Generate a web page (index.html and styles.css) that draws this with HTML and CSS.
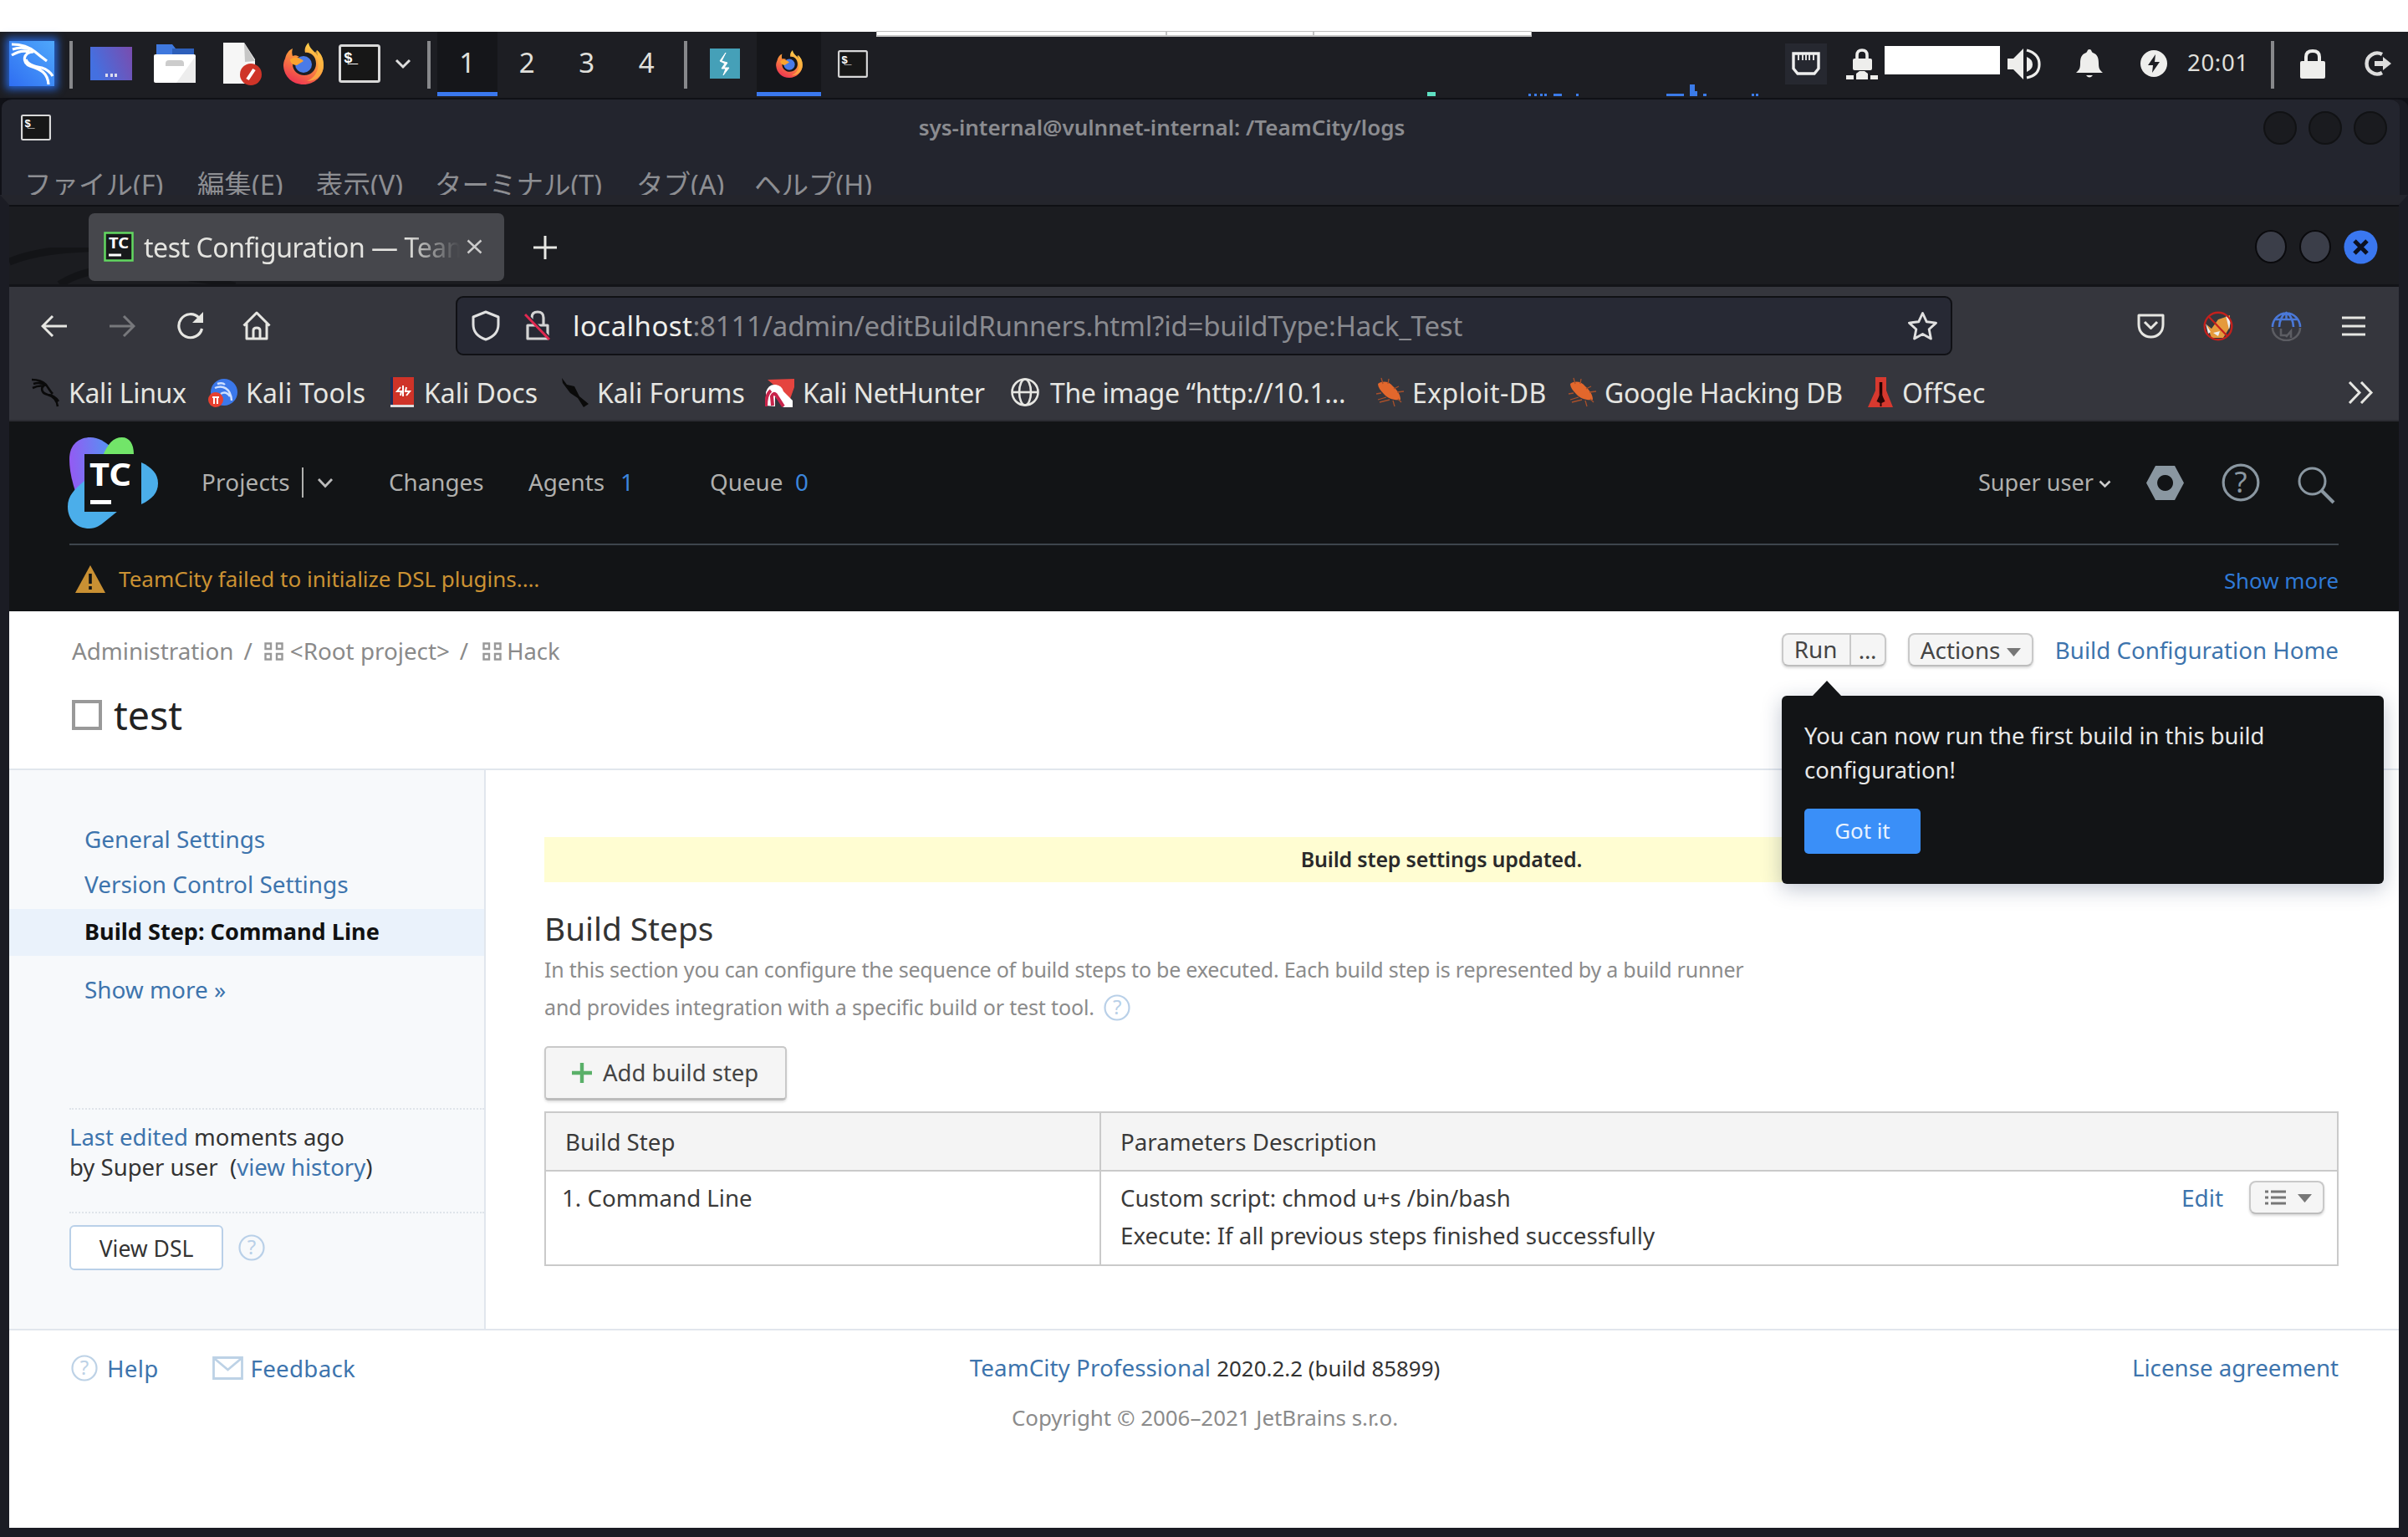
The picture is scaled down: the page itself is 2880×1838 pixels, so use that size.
FILE: index.html
```html
<!DOCTYPE html>
<html lang="en">
<head>
<meta charset="utf-8">
<title>test Configuration — TeamCity</title>
<link rel="stylesheet" href="styles.css">
</head>
<body>
<svg class="defs" width="0" height="0">
  <defs>
    <linearGradient id="gKali" x1="0" y1="1" x2="1" y2="0"><stop offset="0" stop-color="#2f6ef2"/><stop offset="1" stop-color="#4fa8fb"/></linearGradient>
    <linearGradient id="gDesk" x1="0" y1="0.3" x2="1" y2="0"><stop offset="0" stop-color="#4470e0"/><stop offset="1" stop-color="#7a4cae"/></linearGradient>
    <linearGradient id="gFox" x1="0.8" y1="0" x2="0.3" y2="1"><stop offset="0" stop-color="#ffe14d"/><stop offset="0.45" stop-color="#fb923c"/><stop offset="1" stop-color="#ee3352"/></linearGradient>
    <linearGradient id="gPurple" x1="0" y1="0.5" x2="1" y2="0.4"><stop offset="0" stop-color="#9559f3"/><stop offset="1" stop-color="#4a9df2"/></linearGradient>
    <symbol id="firefox" viewBox="0 0 48 50">
      <path d="M30 0c-4 4-5 8-4 12 6-1 13 4 13 13 0 8-6 14-14 14S11 33 11 26c0-5 3-8 8-9-3-2-6-2-8-1-1-3-1-6 0-9-5 2-8 7-9 12C0 23 0 26 0 28c1 13 11 22 24 22s24-10 24-23c0-8-3-14-8-18l1 7C38 10 31 8 30 0z" fill="url(#gFox)"/>
      <circle cx="24" cy="26" r="10" fill="#4a7be8"/>
      <path d="M8 20c6-4 12-2 16 2l-8 5c-5 0-8-3-8-7z" fill="#fba32f"/>
      <path d="M37 13c8 10 6 27-9 33 13 0 20-9 20-19 0-8-3-14-8-18z" fill="#fdba42" opacity=".7"/>
    </symbol>
    <symbol id="term" viewBox="0 0 50 46">
      <rect x="1.5" y="1.5" width="47" height="43" rx="2" fill="#171717" stroke="#d8d8d8" stroke-width="3"/>
      <text x="6" y="22" font-family="Liberation Mono, monospace" font-size="18" font-weight="700" fill="#fff" textLength="17">$_</text>
    </symbol>
    <symbol id="dragon" viewBox="0 0 36 36">
      <path d="M1 3c7 0 13 2 17 6 3 4 5 8 8 11M3 8c6-2 11-1 15 2M2 13c6-3 10-3 14-2M17 9c-6 3-5 10 3 12 7 2 11 6 12 14M20 21c5 0 9 2 13 8" fill="none" stroke="currentColor" stroke-width="2.6"/>
    </symbol>
    <symbol id="bug" viewBox="0 0 36 36">
      <path d="M4 8c6-4 13-3 18 3 6 5 9 11 9 16-7 1-15-1-20-7-4-4-7-8-7-12z" fill="#e2672c"/>
      <path d="M10 8L8 1M16 8l1-6M23 14l6-3M27 18l8-1M8 19l-6 1M14 24l-10 3M18 27l-12 3M22 28l2 7M28 26l4 4" stroke="#a8502a" stroke-width="1.3"/>
    </symbol>
    <symbol id="help" viewBox="0 0 32 32">
      <circle cx="16" cy="16" r="14.5" fill="none" stroke="currentColor" stroke-width="2.2"/>
      <text x="16" y="24.3" text-anchor="middle" font-family="Noto Sans, sans-serif" font-size="24" fill="currentColor">?</text>
    </symbol>
    <symbol id="squares" viewBox="0 0 24 22">
      <path d="M1.5 1.5h6.5v6.5H1.5zM15 1.5h6.5v6.5H15zM1.5 14h6.5v6.5H1.5zM15 14h6.5v6.5H15z" fill="none" stroke="#999" stroke-width="2.4"/>
    </symbol>
  </defs>
</svg>

<div class="blank"></div>

<header class="panel">
  <span class="kali"><svg width="54" height="54" viewBox="0 0 54 54"><rect width="54" height="54" fill="url(#gKali)"/><path d="M3 4c12 0 21 3 28 9 6 5 10 8 14 11M4 10c9-3 17-2 24 1M3 17c8-5 15-6 21-4M29 13c-13 1-14 13-4 17 13 4 21 8 22 22M20 22c2 7 12 9 19 10 6 2 10 5 13 10" fill="none" stroke="#fff" stroke-width="3.2"/></svg></span>
  <i class="psep s1"></i>
  <svg class="p-desk" width="50" height="40"><rect width="50" height="40" fill="url(#gDesk)"/><path d="M18 34h3M24 34h3M29 34h3" stroke="#dde" stroke-width="4"/></svg>
  <svg class="p-fold" width="50" height="46"><path d="M3 0h19l4 5h22v10H3z" fill="#3f78de"/><path d="M22 5h26v8H22z" fill="#2d5fba"/><rect y="12" width="50" height="34" rx="2" fill="#fff"/><path d="M50 14v32H27z" fill="#ededed"/><path d="M14 26v-3q0-4 4-4h14q4 0 4 4v3z" fill="#ccc"/></svg>
  <svg class="p-file" width="46" height="51"><path d="M0 0h25l13 20v29H0z" fill="#f6f6f6"/><path d="M25 0l13 22-12 1z" fill="#c6c6c6"/><circle cx="33" cy="38" r="13" fill="#cf3428"/><path d="M29 44l8-12" stroke="#fff" stroke-width="4"/></svg>
  <svg class="p-fox" width="48" height="50"><use href="#firefox"/></svg>
  <svg class="p-term" width="50" height="46"><use href="#term"/></svg>
  <svg class="p-chev" width="20" height="13"><path d="M2 2l8 8 8-8" fill="none" stroke="#ddd" stroke-width="3"/></svg>
  <i class="psep s2"></i>
  <span class="ws active">1</span><span class="ws">2</span><span class="ws">3</span><span class="ws">4</span>
  <i class="psep s3"></i>
  <svg class="p-burp" width="36" height="36"><rect width="36" height="36" fill="#45a0b8"/><path d="M19 5l-5 10 7 2-4 6h6l-7 9 3-8h-5l4-6-6-3z" fill="#fff" stroke="#fff"/></svg>
  <span class="task"><svg width="32" height="33"><use href="#firefox"/></svg></span>
  <svg class="p-term2" width="36" height="33"><use href="#term"/></svg>
  <span class="grow"></span>
  <span class="eth"><svg width="34" height="29"><path d="M2 2h30v18l-5 6H7l-5-6z" fill="none" stroke="#eee" stroke-width="3.4"/><path d="M8 3v7M13 3v7M17 3v7M21 3v7M26 3v7" stroke="#ddd" stroke-width="2"/></svg></span>
  <svg class="p-vpn" width="38" height="37" fill="#eeeeec"><rect x="8" y="12" width="23" height="14" rx="2"/><path d="M13 13V8q0-6 6-6t6 6v5" fill="none" stroke="#eeeeec" stroke-width="3.6"/><path d="M0 32h9v5H0zM12 30l4-3h6l4 3v7H12zM29 32h9v5h-9z"/></svg>
  <span class="mask"></span>
  <svg class="p-vol" width="40" height="37" fill="#eeeeec"><path d="M0 12h7L19 0v37L7 25H0z"/><path d="M23 10q7 3 7 9t-7 9z"/><path d="M23 2q15 4 15 17T23 35" fill="none" stroke="#eeeeec" stroke-width="3.2"/></svg>
  <svg class="p-bell" width="32" height="35" fill="#eeeeec"><path d="M16 0c3 0 2 3 4 4 6 2 7 7 7 13 0 7 2 8 5 11H0c3-3 5-4 5-11C5 11 6 6 12 4c2-1 1-4 4-4zM12 31h8q-4 5-8 0z"/></svg>
  <svg class="p-pow" width="32" height="32"><circle cx="16" cy="16" r="16" fill="#eeeeec"/><path d="M18 5L9 18h6l-1 9 9-13h-6z" fill="#1d1e23"/></svg>
  <span class="clock">20:01</span>
  <i class="psep s4"></i>
  <svg class="p-lock" width="30" height="35"><rect y="14" width="30" height="21" rx="2" fill="#eeeeec"/><path d="M7 15V9q0-7 8-7t8 7v6" fill="none" stroke="#eeeeec" stroke-width="4"/></svg>
  <svg class="p-out" width="34" height="32"><path d="M23 5a12.500 12.500 0 1 0 0 22" fill="none" stroke="#ddd" stroke-width="4.400"/><path d="M14 13h10V8l10 8-10 8v-5H14z" fill="#ddd"/></svg>
  <svg class="graph" width="400" height="16" fill="#3b7be8"><path fill="#5fe0c2" d="M0 9h10v5H0z"/><path d="M121 11h3v3h-3zM128 11h3v3h-3zM135 11h3v3h-3zM140 11h3v3h-3zM151 11h10v3h-10zM178 11h3v3h-3zM286 11h21v3h-21zM314 12v-12h6v8h3v6h-9zM330 11h4v3h-4zM388 11h3v3h-3zM393 11h3v3h-3z"/></svg>
  <div class="strip"><i></i><i></i><i></i></div>
</header>

<section class="terminal">
  <div class="tbar">
    <svg width="36" height="31" viewBox="0 0 50 46" preserveAspectRatio="none"><use href="#term"/></svg>
    <h1>sys-internal@vulnnet-internal: /TeamCity/logs</h1>
    <span class="tbtns"><i></i><i></i><i></i></span>
  </div>
  <div class="tmenu"><span>ファイル(F)</span><span>編集(E)</span><span>表示(V)</span><span>ターミナル(T)</span><span>タブ(A)</span><span>ヘルプ(H)</span></div>
</section>

<main class="browser">
  <div class="tabs">
    <svg class="swirl" width="290" height="44"><path d="M0 17C30 5 60 2 110 0M60 44c15-9 25-12 40-16M215 36c25 2 40 6 55 10" fill="none" stroke="#121316" stroke-width="9"/></svg>
    <div class="tab">
      <svg width="36" height="36"><rect x="1.500" y="1.500" width="33" height="33" fill="#18191b" stroke="#62d860" stroke-width="2.500"/><text x="6" y="20" font-family="Noto Sans, sans-serif" font-weight="700" font-size="18" fill="#fff" textLength="24" lengthAdjust="spacingAndGlyphs">TC</text><path d="M6 28h15" stroke="#fff" stroke-width="3"/></svg>
      <span class="tabname">test Configuration — Team</span>
      <svg class="x" width="19" height="18"><path d="M1.500 1.500l16 15M17.500 1.500l-16 15" stroke="#ccc" stroke-width="2.400"/></svg>
    </div>
    <svg class="plus" width="28" height="28"><path d="M14 0v28M0 14h28" stroke="#e8e8e4" stroke-width="3"/></svg>
    <span class="wbtns"><i></i><i></i><svg width="41" height="41"><circle cx="20.500" cy="20.500" r="20" fill="#3a77f0"/><path d="M13 13l15 15M28 13L13 28" stroke="#0c1020" stroke-width="5"/></svg></span>
  </div>

  <div class="nav">
    <svg class="n-back" width="32" height="28"><path d="M31 14H2M14 2L2 14l12 12" fill="none" stroke="#e6e6e2" stroke-width="3"/></svg>
    <svg class="n-fwd" width="32" height="28"><path d="M1 14h29M18 2l12 12-12 12" fill="none" stroke="#77787c" stroke-width="3"/></svg>
    <svg class="n-rel" width="33" height="34"><path d="M27 7A14 14 0 1 0 30.500 20" fill="none" stroke="#e6e6e2" stroke-width="3.200"/><path d="M32 0v13H19z" fill="#e6e6e2"/></svg>
    <svg class="n-home" width="34" height="35"><path d="M1.500 17.500L17 2l15.500 15.500M5 15v18h24V15M13 33V23q0-3 4-3t4 3v10" fill="none" stroke="#e6e6e2" stroke-width="3" stroke-linejoin="round"/></svg>
    <div class="url">
      <svg class="u-shield" width="34" height="37"><path d="M17 2L2 8v9c0 9 6 15 15 18 9-3 15-9 15-18V8z" fill="none" stroke="#e0e0e0" stroke-width="3" stroke-linejoin="round"/></svg>
      <svg class="u-lock" width="32" height="37"><path d="M9 12V9q0-7 7-7t7 7v8M4 18h24v16H4z" fill="none" stroke="#d4d4d4" stroke-width="3.200" stroke-linejoin="round"/><path d="M3 5l29 30" stroke="#272934" stroke-width="3"/><path d="M1 5l29 30" stroke="#e22850" stroke-width="3"/></svg>
      <span class="addr"><b>localhost</b>:8111/admin/editBuildRunners.html?id=buildType:Hack_Test</span>
      <svg class="u-star" width="37" height="36"><path d="M18.500 2.500l4.800 10.300 11.200 1.300-8.300 7.700 2.200 11.200-9.900-5.600L8.600 33l2.200-11.200-8.300-7.700 11.200-1.300z" fill="none" stroke="#e0e0e0" stroke-width="2.900" stroke-linejoin="round"/></svg>
    </div>
    <svg class="n-pocket" width="33" height="30"><path d="M2 2h29v11c0 9-6 15-14.500 15S2 22 2 13zM9 10l7.500 7.500L24 10" fill="none" stroke="#e6e6e2" stroke-width="3" stroke-linejoin="round"/></svg>
    <svg class="n-foxy" width="36" height="36"><path d="M4 16l6 5 8-11 9-3 5-2v14l-8 13H10z" fill="#e59a3c"/><path d="M3 15l6 10-3 2zM27 5l6 7-2 10zM12 26l8-2-2 6z" fill="#eee"/><circle cx="18" cy="18" r="16.300" fill="none" stroke="#c4201c" stroke-width="2.400"/><path d="M7 7l22 23" stroke="#c4201c" stroke-width="2.200"/></svg>
    <svg class="n-globe" width="37" height="36" fill="none" stroke-width="2.600"><path d="M2 19a16.500 16.500 0 0 1 33 0M10 19q1-13 8.500-17 7.500 4 8.500 17M18.500 2v9M5 10h27" stroke="#4a78d8"/><path d="M2 20a16.500 15 0 0 0 33 0M12 21v8h7M18 31l6-7v8" stroke="#5c5d63"/></svg>
    <svg class="n-menu" width="28" height="24"><path d="M0 2h28M0 12h28M0 22h28" stroke="#e6e6e2" stroke-width="3"/></svg>
  </div>

  <div class="marks">
    <span><svg width="36" height="36" color="#0a0a0a"><use href="#dragon"/></svg>Kali Linux</span>
    <span><svg width="36" height="36"><circle cx="19" cy="18" r="16" fill="#3b78ea"/><path d="M8 13c9-4 19 0 20 15M15 20q6-4 11 3M11 8q6-2 9 1" fill="none" stroke="#cfe0ff" stroke-width="2.400"/><circle cx="9" cy="27" r="9" fill="#e8402f"/><path d="M5 24h8M7 24v8M11 24v8" stroke="#fff" stroke-width="2"/></svg>Kali Tools</span>
    <span><svg width="36" height="36"><rect x="5" width="28" height="33" fill="#cf3328"/><path d="M5 0h3v33H5z" fill="#1f2c58"/><path d="M5 33h28v3H5z" fill="#ddd"/><path d="M17 12l-4 5h5l-1 5M24 12l-1 5h5l-4 5M20 10v13" stroke="#fff" stroke-width="2" fill="none"/></svg>Kali Docs</span>
    <span><svg width="36" height="36"><path d="M3 1l6 8 9 2 6 12 11 9-6 4-7-11-9-6L4 7z" fill="#0a0a0a"/></svg>Kali Forums</span>
    <span><svg width="36" height="36"><path d="M3 3L35 2v10l-5 14z" fill="#e5443f"/><path d="M1 34V18Q4 8 13 9q7 1 9 8l11 11v8H22L12 23v12z" fill="#fff"/><path d="M1 35c0-8 2-16 6-19M22 35L13 21q-3-3-5 2l1 11" stroke="#c8234a" stroke-width="4" fill="none"/></svg>Kali NetHunter</span>
    <span><svg class="shift" width="36" height="36" fill="none" stroke="#e6e6e2" stroke-width="2.600"><circle cx="18" cy="18" r="15.500"/><ellipse cx="18" cy="18" rx="7" ry="15.500"/><path d="M3 18h30"/></svg>The image “http://10.1…</span>
    <span><svg width="36" height="36"><use href="#bug"/></svg>Exploit-DB</span>
    <span><svg width="36" height="36"><use href="#bug"/></svg>Google Hacking DB</span>
    <span><svg width="36" height="36"><path d="M13 0h13v16l8 20H4l9-20z" fill="#d8392f"/><path d="M19.500 6v18" stroke="#200" stroke-width="3.500"/><path d="M19.500 18l5 11-4 2v4h-2v-4l-4-2z" fill="#2a0606"/></svg>OffSec</span>
    <svg class="more" width="31" height="27"><path d="M2 1l12 12.500L2 26M16 1l12 12.500L16 26" fill="none" stroke="#e6e6e2" stroke-width="3"/></svg>
  </div>

  <div class="page">
    <header class="tc">
      <div class="tcnav">
        <svg class="logo" width="109" height="109" viewBox="0 0 109 109">
          <path d="M2 26C2 8 14 0 27 0c10 0 17 5 24 11l10 22-40 60C8 66 2 45 2 26z" fill="url(#gPurple)"/>
          <path d="M42 22C48 8 54 0 65 0c9 0 14 8 14 20H42z" fill="#72e569"/>
          <path d="M20 52C8 62 0 70 0 83c0 16 11 26 26 26 8 0 13-4 18-8l26-21H20z" fill="#4baeea"/>
          <path d="M88 30c13 6 20 14 20 25s-7 19-20 25z" fill="#4baeea"/>
          <rect x="20" y="20" width="60" height="69" fill="#121416"/>
          <text x="26" y="58" font-family="Noto Sans, sans-serif" font-weight="700" font-size="38" fill="#fff" textLength="50" lengthAdjust="spacingAndGlyphs">TC</text>
          <path d="M27 77.500h25" stroke="#fff" stroke-width="5"/>
        </svg>
        <span class="t-proj">Projects</span><i class="bar"></i>
        <svg class="t-chev" width="20" height="13"><path d="M2 2l8 8.500L18 2" fill="none" stroke="#bbb" stroke-width="2.800"/></svg>
        <span class="t-chg">Changes</span>
        <span class="t-ag">Agents</span><span class="t-n1">1</span>
        <span class="t-q">Queue</span><span class="t-n0">0</span>
        <span class="grow"></span>
        <span class="t-user">Super user</span>
        <svg class="t-uchev" width="15" height="10"><path d="M1.500 1.500l6 6 6-6" fill="none" stroke="#ccc" stroke-width="2.600"/></svg>
        <svg class="t-nut" width="45" height="41"><path fill-rule="evenodd" d="M11 0h23l11 20.500L34 41H11L0 20.500zM22.500 11a9.500 9.500 0 1 0 .1 0z" fill="#8a97a1"/></svg>
        <svg class="t-help" width="46" height="46" viewBox="0 0 32 32"><use href="#help"/></svg>
        <svg class="t-find" width="45" height="45"><circle cx="17.500" cy="17.500" r="15.500" fill="none" stroke="#8a97a1" stroke-width="3"/><path d="M28 28l15 15" stroke="#8a97a1" stroke-width="4"/></svg>
      </div>
      <div class="warn">
        <svg width="36" height="33"><path d="M18 0l18 33H0z" fill="#c99033"/><path d="M18 10v12M18 25v4" stroke="#121416" stroke-width="3.600"/></svg>
        <span>TeamCity failed to initialize DSL plugins.…</span>
        <a>Show more</a>
      </div>
    </header>

    <section class="title">
      <div class="crumbs">
        <span>Administration</span><span class="sl1">/</span>
        <svg class="c1" width="24" height="22"><use href="#squares"/></svg><span class="root">&lt;Root project&gt;</span><span class="sl2">/</span>
        <svg class="c2" width="24" height="22"><use href="#squares"/></svg><span class="hack">Hack</span>
        <span class="grow"></span>
        <span class="btn run"><span>Run</span><span>...</span></span>
        <span class="btn act">Actions<svg width="17" height="10"><path d="M0 0h17l-8.500 10z" fill="#777"/></svg></span>
        <a>Build Configuration Home</a>
      </div>
      <div class="name"><i></i><h2>test</h2></div>
    </section>

    <section class="body">
      <aside>
        <a>General Settings</a>
        <a>Version Control Settings</a>
        <b>Build Step: Command Line</b>
        <a class="sm">Show more »</a>
        <p><a>Last edited</a> moments ago<br>by Super user&nbsp; (<a>view history</a>)</p>
        <div class="dsl"><span>View DSL</span><svg width="32" height="32"><use href="#help"/></svg></div>
      </aside>
      <div class="content">
        <div class="msg">Build step settings updated.</div>
        <h3>Build Steps</h3>
        <p class="desc">In this section you can configure the sequence of build steps to be executed. Each build step is represented by a build runner<br><span>and provides integration with a specific build or test tool.</span><svg width="32" height="32"><use href="#help"/></svg></p>
        <div class="add"><svg width="24" height="24"><path d="M12 0v24M0 12h24" stroke="#5ab069" stroke-width="4.400"/></svg>Add build step</div>
        <table>
          <tr><th>Build Step</th><th>Parameters Description</th></tr>
          <tr><td>1. Command Line</td><td><div class="params"><div>Custom script: chmod u+s /bin/bash<br><span>Execute: If all previous steps finished successfully</span></div><a>Edit</a><span class="btn lst"><svg width="56" height="20"><path d="M0 3h4M7 3h18M0 10h4M7 10h18M0 17h4M7 17h18" stroke="#777" stroke-width="3"/><path d="M39 6h17l-8.500 10z" fill="#777"/></svg></span></div></td></tr>
        </table>
      </div>
    </section>

    <footer>
      <div class="fl"><svg width="32" height="32"><use href="#help"/></svg><a>Help</a><svg class="mail" width="37" height="28"><path d="M1.500 1.500h34v25h-34zM3 3l15.500 13L34 3" fill="none" stroke="#bdd2e6" stroke-width="2.800"/></svg><a>Feedback</a></div>
      <div class="fc"><div><a>TeamCity Professional</a> <span>2020.2.2 (build 85899)</span></div><div class="copy">Copyright © 2006–2021 JetBrains s.r.o.</div></div>
      <div class="fr"><a>License agreement</a></div>
    </footer>

    <div class="popup">
      <p>You can now run the first build in this build<br>configuration!</p>
      <span class="got">Got it</span>
    </div>
  </div>
</main>
</body>
</html>
```
FILE: styles.css
```css
* { box-sizing: border-box; }
body { margin: 0; width: 2880px; height: 1838px; overflow: hidden; background: #101117; font-family: "Noto Sans", "Noto Sans CJK JP", sans-serif; font-size: 27.700px; font-weight: 400; }
svg { display: block; flex: none; }
h1, h2, h3, p { margin: 0; font-weight: 400; }
i { font-style: normal; display: block; flex: none; }
a { color: #3d74ad; }
.defs { position: absolute; }
.grow { flex: 1; }
.blank { height: 38px; background: #fff; }

/* desktop panel */
.panel { position: relative; height: 79px; background: #1d1e23; display: flex; align-items: center; color: #e0e0dc; }
.panel > svg { margin-bottom: 3px; }
.kali { margin-left: 11px; margin-bottom: 3px; box-shadow: 0 0 9px 4px #2560cc; }
.psep { width: 4px; height: 57px; background: #87888b; }
.s1 { margin-left: 18px; }
.p-desk { margin-left: 21px; }
.p-fold { margin-left: 26px; }
.p-file { margin-left: 33px; }
.p-fox { margin-left: 26px; }
.p-term { margin-left: 18px; }
.p-chev { margin-left: 17px; }
.s2 { margin-left: 19px; }
.ws { width: 71.500px; height: 79px; text-align: center; font-size: 33px; line-height: 74px; }
.ws.active { margin-left: 8px; background: #15161a; border-bottom: 5px solid #3a78ee; height: 77px; align-self: flex-start; line-height: 74px; }
.s3 { margin-left: 9px; }
.p-burp { margin-left: 27px; }
.task { margin-left: 20px; width: 77px; height: 77px; align-self: flex-start; background: #15161a; border-bottom: 5px solid #3a78ee; display: flex; justify-content: center; align-items: center; padding-top: 4px; }
.p-term2 { margin-left: 20px; }
.eth { width: 50px; height: 49px; background: #262830; display: grid; place-items: center; margin-bottom: 3px; }
.p-vpn { margin-left: 23px; }
.mask { margin-left: 8px; width: 138px; height: 34px; background: #fff; margin-bottom: 11px; }
.p-vol { margin-left: 9px; }
.p-bell { margin-left: 42px; }
.p-pow { margin-left: 45px; }
.clock { margin-left: 24px; width: 72px; font-size: 27.500px; line-height: 40px; letter-spacing: .7px; margin-bottom: 6px; }
.s4 { margin-left: 28px; }
.p-lock { margin-left: 31px; }
.p-out { margin-left: 45px; margin-right: 20px; }
.graph { position: absolute; left: 1707px; top: 63px; }
.panel > .graph { margin: 0; }
.strip { position: absolute; left: 1048px; top: -1px; width: 784px; height: 7px; display: flex; background: #fff; border: 1px solid #bdbdbd; border-bottom: 2px solid #c4c4c4; }
.strip i:nth-child(1) { width: 347px; border-right: 2px solid #c4c4c4; }
.strip i:nth-child(2) { width: 176px; border-right: 2px solid #c4c4c4; }

/* terminal window */
.terminal { height: 116px; margin: 0 0 0 2px; background: #23252e; border-top: 2px solid #101116; border-radius: 12px 12px 0 0; overflow: hidden; box-shadow: inset -10px 0 0 #1a1b22; color: #8d8e92; }
.tbar { display: flex; align-items: center; height: 67px; padding: 0 25px 0 23px; }
.tbar h1 { flex: 1; text-align: center; font-size: 26px; font-weight: 600; padding-left: 11px; line-height: 40px; margin-top: -2px; color: #8b8c90; }
.tbtns { display: flex; gap: 14px; }
.tbtns i { width: 40px; height: 40px; border-radius: 50%; background: #1a1b1f; border: 2px solid #111214; }
.tmenu { display: flex; padding-left: 27px; font-size: 32.500px; line-height: 46px; height: 60px; padding-top: 12px; }
.tmenu span { white-space: nowrap; }
.tmenu span:nth-child(1) { width: 207px; }
.tmenu span:nth-child(2) { width: 142px; }
.tmenu span:nth-child(3) { width: 142px; }
.tmenu span:nth-child(4) { width: 241px; }
.tmenu span:nth-child(5) { width: 141px; }

/* browser window */
.browser { height: 1605px; border-style: solid; border-color: #1b1c24; border-width: 12px 11px 11px; background: #1b1c20; position: relative; border-top-color: #24252c; display: flex; flex-direction: column; }
.tabs { height: 98px; border-top: 2px solid #0f1014; border-bottom: 3px solid #131418; display: flex; align-items: center; position: relative; }
.swirl { position: absolute; left: 0; bottom: 0; opacity: .8; }
.tab { position: relative; margin-left: 95px; margin-top: 3px; width: 497px; height: 81px; border-radius: 7px; background: #46474c; display: flex; align-items: center; padding-left: 18px; }
.tabname { margin-left: 12px; width: 382px; overflow: hidden; white-space: nowrap; font-size: 32px; letter-spacing: -.45px; color: #e4e4e0; -webkit-mask-image: linear-gradient(90deg, #000 82%, transparent 99%); }
.x { margin-left: 4px; }
.plus { margin-left: 35px; margin-top: 4px; }
.wbtns { margin-left: auto; margin-top: 3px; display: flex; gap: 15px; padding-right: 25px; align-items: center; }
.wbtns i { width: 38px; height: 40px; border-radius: 50%; background: #3b3e49; border: 2px solid #0a0a0d; }
.nav { height: 91px; background: #35363d; display: flex; align-items: center; padding-top: 2px; }
.n-back { margin-left: 38px; }
.n-fwd { margin-left: 49px; }
.n-rel { margin-left: 49px; }
.n-home { margin-left: 46px; }
.url { margin-left: 221px; width: 1790px; height: 71px; background: #272934; border: 2px solid #101115; border-radius: 9px; display: flex; align-items: center; padding-left: 17px; }
.u-lock { margin-left: 29px; }
.addr { margin-left: 26px; font-size: 33px; letter-spacing: -.2px; color: #8a8b90; white-space: nowrap; }
.addr b { font-weight: 400; color: #f0f0ec; letter-spacing: .44px; }
.u-star { margin-left: auto; margin-right: 15px; }
.n-pocket { margin-left: 221px; }
.n-foxy { margin-left: 46px; }
.n-globe { margin-left: 45px; }
.n-menu { margin-left: 48px; }
.marks { height: 70px; background: #35363d; display: grid; grid-template-columns: 212px 213px 207px 246px 296px 433px 230px 356px 566px auto; padding: 2px 0 0 27px; align-items: center; font-size: 32px; color: #e6e6e2; border-bottom: 2px solid #2c2d33; white-space: nowrap; }
.marks span { display: flex; align-items: center; gap: 9px; }
.marks span svg { margin-left: -1px; }
.marks .shift { margin-left: -4px; margin-right: 3px; }
.marks span:nth-child(1), .marks span:nth-child(5), .marks span:nth-child(6), .marks span:nth-child(8) { letter-spacing: -.35px; }
.marks span:nth-child(2), .marks span:nth-child(9) { letter-spacing: .3px; }
.marks span:nth-child(7) { letter-spacing: .45px; }
.more { margin-left: 11px; }

/* TeamCity page */
.page { flex: 1; background: #fff; position: relative; color: #333; }
.tc { background: #121416; height: 227px; padding: 0 72px 0 70px; }
.tcnav { height: 146px; display: flex; align-items: center; color: #b0b0ae; font-size: 27.800px; }
.tcnav span { margin-top: -2px; }
.t-proj { margin-left: 51px; width: 110px; letter-spacing: .2px; }
.bar { margin-left: 10px; width: 2px; height: 36px; background: #b0b0ae; }
.t-chev { margin-left: 16px; }
.t-chg { margin-left: 66px; width: 117px; }
.t-ag { margin-left: 50px; width: 95px; }
.t-n1 { margin-left: 15px; width: 20px; color: #3c86dd; }
.t-q { margin-left: 87px; width: 90px; }
.t-n0 { margin-left: 12px; color: #3c86dd; }
.t-user { font-size: 27.100px; }
.t-uchev { margin: 4px 0 0 6px; }
.t-nut { margin-left: 42px; }
.t-help { margin-left: 45px; color: #8a97a1; }
.t-find { margin-left: 45px; margin-right: 4px; margin-top: 6px; }
.warn { border-top: 2px solid #3d454c; margin-left: 2px; height: 81px; display: flex; align-items: center; padding: 1px 0 0 7px; font-size: 26px; color: #cb9233; }
.warn span { margin-left: 16px; }
.warn a { margin-left: auto; color: #2f7ad6; padding-top: 3px; font-size: 25.900px; }

.title { height: 190px; padding: 0 72px 0 75px; border-bottom: 2px solid #e1e6ed; }
.crumbs { height: 95px; display: flex; align-items: center; font-size: 27.800px; color: #8a8a8a; }
.crumbs > span:not(.btn) { margin-top: -1px; }
.sl1 { margin-left: 12px; }
.c1 { margin-left: 14px; }
.root { margin-left: 7px; }
.sl2 { margin-left: 12px; }
.c2 { margin-left: 17px; }
.hack { margin-left: 5px; font-size: 27.400px; }
.crumbs > a { margin-left: 26px; margin-top: -4px; font-size: 27.700px; }
.btn { border: 2px solid #c9c9c9; border-bottom-color: #bdbdbd; border-radius: 8px; background: #f5f5f5; box-shadow: 0 2px 3px rgba(0,0,0,.14); color: #444; display: flex; align-items: center; height: 40px; margin-top: -4px; line-height: 34px; }
.run { width: 125px; }
.run span:first-child { width: 81px; padding-left: 13px; border-right: 2px solid #c9c9c9; height: 36px; }
.run span:last-child { padding-left: 9px; letter-spacing: -.3px; }
.act { margin-left: 26px; width: 150px; padding-left: 13px; }
.act svg { margin: 6px 0 0 8px; }
.name { display: flex; align-items: center; height: 60px; margin-top: 0; }
.name i { width: 36px; height: 36px; border: 4px solid #999; margin-bottom: 12px; margin-top: 10px; }
.name h2 { font-size: 46.500px; margin-left: 14px; line-height: 60px; margin-top: -3px; color: #222; }

.body { display: flex; height: 668px; }
aside { width: 570px; background: #f7f9fb; border-right: 2px solid #e1e6ed; display: flex; flex-direction: column; padding-top: 55px; font-size: 27.900px; }
aside > a, aside > b { padding-left: 90px; line-height: 54px; height: 54px; white-space: nowrap; }
aside > b { margin-top: 3px; height: 56px; background: #eaf2fb; color: #111; font-size: 27.100px; line-height: 54px; }
aside > .sm { margin-top: 13px; }
aside p { margin: 115px 0 0 72px; border: dotted #dfe4ea; border-width: 2px 0; height: 126px; padding-top: 15px; line-height: 36px; font-size: 27.500px; white-space: nowrap; }
.dsl { display: flex; align-items: center; margin: 14px 0 0 72px; gap: 18px; color: #b9d0e8; }
.dsl span { width: 184px; height: 54px; border: 2px solid #b9d0e8; border-radius: 6px; background: #fff; text-align: center; line-height: 52px; font-size: 26.500px; color: #333; }
.content { flex: 1; padding: 80px 72px 0 70px; }
.msg { height: 54px; background: #fffdd2; text-align: center; line-height: 52px; font-size: 25px; font-weight: 600; letter-spacing: -.2px; color: #2a2a2a; }
h3 { font-size: 38.700px; line-height: 54px; height: 54px; margin-top: 28px; color: #333; }
.desc { font-size: 25px; letter-spacing: -.225px; line-height: 45px; color: #8b8b8b; white-space: nowrap; }
.desc span { letter-spacing: -.15px; }
.desc svg { display: inline-block; vertical-align: -7px; margin-left: 11px; color: #b9d0e8; }
.add { margin-top: 24px; width: 290px; height: 65px; border: 2px solid #c9c9c9; border-bottom: 3px solid #bcbcbc; border-radius: 5px; background: #f5f5f5; box-shadow: 0 2px 3px rgba(0,0,0,.12); display: flex; align-items: center; padding-left: 31px; padding-bottom: 1px; gap: 13px; font-size: 27.500px; color: #444; }
table { margin-top: 13px; width: 2146px; height: 184px; border-collapse: collapse; table-layout: fixed; line-height: 45px; color: #3a3a3a; }
th, td { border: 2px solid #cacaca; font-weight: 400; text-align: left; padding: 0 0 0 23px; vertical-align: top; }
th { background: #f4f4f4; height: 70px; vertical-align: middle; }
th:first-child { width: 664px; }
td { padding-top: 9px; height: 113px; }
td:first-child { padding-left: 19px; }
.params { display: flex; align-items: flex-start; font-size: 27.500px; }
.params > div { flex: 1; }
.params > div span { font-size: 27.700px; }
.params > a { font-size: 28px; }
.lst { margin: 2px 15px 0 31px; width: 90px; padding-left: 17px; }

footer { border-top: 2px solid #e1e6ed; height: 238px; padding: 26px 72px 0 74px; display: grid; grid-template-columns: 1fr auto 1fr; line-height: 38px; align-items: start; }
.fl { display: flex; align-items: center; height: 38px; color: #bdd2e6; }
.fl a { margin-left: 11px; margin-top: -1px; letter-spacing: .3px; }
.fl .mail { margin-left: 64px; margin-right: 0; }
.fl .mail + a { margin-left: 9px; }
.fc { text-align: center; color: #333; margin-top: -1px; }
.fc a { letter-spacing: .1px; }
.fc span { font-size: 25.900px; }
.copy { margin-top: 21px; font-size: 25.900px; color: #8b8b8b; }
.fr { text-align: right; margin-top: -1px; }

.popup { position: absolute; left: 2120px; top: 328px; width: 720px; height: 225px; background: #121416; border-radius: 6px; box-shadow: 0 6px 24px rgba(30,50,90,.28); padding: 28px 27px; color: #e8e8e8; }
.popup::before { content: ""; position: absolute; left: 37px; top: -18px; border: solid transparent; border-width: 0 17px 18px; border-bottom-color: #121416; }
.popup p { font-size: 27.400px; line-height: 40.500px; white-space: nowrap; }
.got { display: block; margin-top: 26px; width: 139px; height: 54px; border-radius: 5px; background: #3a8ff8; text-align: center; line-height: 52px; font-size: 25.800px; color: #e8f2ff; }
```
